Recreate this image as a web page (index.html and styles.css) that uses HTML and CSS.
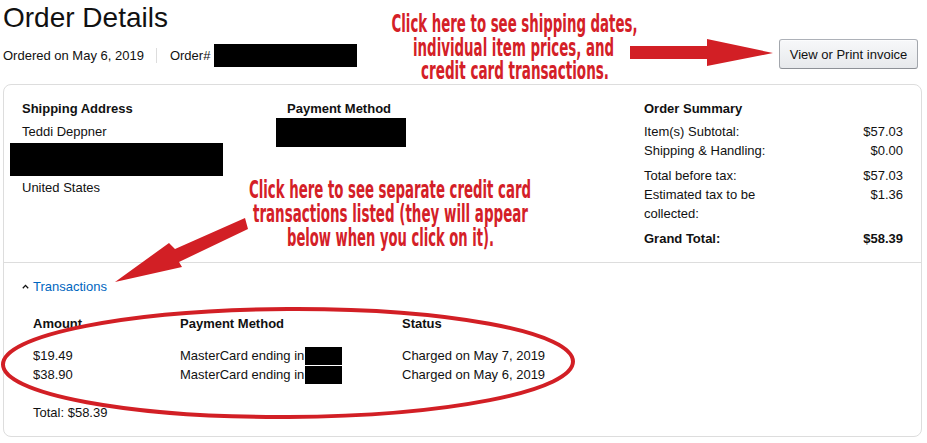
FILE: index.html
```html
<!DOCTYPE html>
<html lang="en">
<head>
<meta charset="utf-8">
<title>Order Details</title>
<link rel="stylesheet" href="styles.css">
</head>
<body>
<div class="page">
  <header class="top">
    <div class="top-left">
      <h1 class="title">Order Details</h1>
      <div class="meta">
        <span>Ordered on May 6, 2019</span>
        <span class="sep"></span>
        <span>Order#</span>
        <span class="redact redact-order"></span>
      </div>
    </div>
    <button class="btn" type="button">View or Print invoice</button>
  </header>

  <section class="card">
    <div class="card-top">
      <div class="col">
        <h3 class="col-title">Shipping Address</h3>
        <div>Teddi Deppner</div>
        <div class="redact redact-addr"></div>
        <div>United States</div>
      </div>
      <div class="col">
        <h3 class="col-title">Payment Method</h3>
        <div class="redact redact-pay"></div>
      </div>
      <div class="col summary">
        <h3 class="col-title">Order Summary</h3>
        <div class="sum-group">
          <div class="sum-row"><div class="sum-label">Item(s) Subtotal:</div><div class="sum-val">$57.03</div></div>
          <div class="sum-row"><div class="sum-label">Shipping &amp; Handling:</div><div class="sum-val">$0.00</div></div>
        </div>
        <div class="sum-group">
          <div class="sum-row"><div class="sum-label">Total before tax:</div><div class="sum-val">$57.03</div></div>
          <div class="sum-row"><div class="sum-label">Estimated tax to be collected:</div><div class="sum-val">$1.36</div></div>
        </div>
        <div class="sum-group">
          <div class="sum-row sum-grand"><div class="sum-label">Grand Total:</div><div class="sum-val">$58.39</div></div>
        </div>
      </div>
    </div>

    <div class="card-bottom">
      <a class="tx-toggle" href="#"><svg class="caret" width="7" height="5" viewBox="0 0 7 5"><path d="M0.8 4.3 L3.5 1.4 L6.2 4.3" fill="none" stroke="#111" stroke-width="1.3"/></svg><span>Transactions</span></a>
      <div class="tx-table">
        <div class="tx-head">Amount</div>
        <div class="tx-head">Payment Method</div>
        <div class="tx-head">Status</div>

        <div class="tx-cell tx-first">$19.49</div>
        <div class="tx-cell tx-first">MasterCard ending in<span class="redact redact-card"></span></div>
        <div class="tx-cell tx-first">Charged on May 7, 2019</div>

        <div class="tx-cell">$38.90</div>
        <div class="tx-cell">MasterCard ending in<span class="redact redact-card"></span></div>
        <div class="tx-cell">Charged on May 6, 2019</div>
      </div>
      <div class="tx-total">Total: $58.39</div>
    </div>
  </section>

  <svg class="annot" width="927" height="443" viewBox="0 0 927 443">
    <ellipse cx="288" cy="363" rx="285" ry="54" fill="none" stroke="#d21f25" stroke-width="4" transform="rotate(-0.3 288 363)"/>
    <polygon points="630,46 707,46 707,39 773,53 707,66 707,59 630,59" fill="#d21f25"/>
    <polygon points="245,218 248,229 179,262 182,267 115,282 169,243 175,249" fill="#d21f25"/>
    <g class="annot-text">
      <text x="514.5" y="32" textLength="246" lengthAdjust="spacingAndGlyphs">Click here to see shipping dates,</text>
      <text x="513.5" y="56" textLength="201" lengthAdjust="spacingAndGlyphs">individual item prices, and</text>
      <text x="515" y="79" textLength="188" lengthAdjust="spacingAndGlyphs">credit card transactions.</text>
      <text x="390" y="198" textLength="282" lengthAdjust="spacingAndGlyphs">Click here to see separate credit card</text>
      <text x="390.5" y="222" textLength="275" lengthAdjust="spacingAndGlyphs">transactions listed (they will appear</text>
      <text x="390.5" y="246" textLength="207" lengthAdjust="spacingAndGlyphs">below when you click on it).</text>
    </g>
  </svg>
</div>
</body>
</html>
```
FILE: styles.css
```css
* { box-sizing: border-box; }

body {
  margin: 0;
  font-family: "Liberation Sans", Arial, sans-serif;
  font-size: 13px;
  line-height: 19px;
  color: #111;
  background: #fff;
}

.page {
  position: relative;
  width: 927px;
  height: 443px;
  padding: 0 5px 0 3px;
  overflow: hidden;
}

.top {
  display: flex;
  justify-content: space-between;
  align-items: flex-start;
}

.title {
  margin: 0;
  font-size: 28px;
  line-height: 36px;
  font-weight: 400;
}

.meta {
  display: flex;
  align-items: center;
  margin-top: 8px;
  height: 23px;
}

.sep {
  width: 1px;
  height: 15px;
  background: #ddd;
  margin: 0 13px 0 12px;
}

.redact { background: #000; }

.redact-order {
  width: 143px;
  height: 23px;
  margin-left: 4px;
}

.btn {
  margin-top: 39px;
  margin-right: 4px;
  width: 139px;
  height: 30px;
  padding: 0;
  border: 1px solid;
  border-color: #adb1b8 #a2a6ac #8d9096;
  border-radius: 3px;
  background: linear-gradient(#f7f8fa, #e7e9ec);
  font: inherit;
  color: #111;
  box-shadow: 0 1px 0 rgba(255,255,255,.6) inset;
}

.card {
  margin-top: 15px;
  border: 1px solid #ddd;
  border-radius: 8px;
}

.card-top {
  display: grid;
  grid-template-columns: 265px 357px 1fr;
  padding: 14px 18px;
}

.col-title {
  margin: 0 0 4px;
  font-size: 13px;
  line-height: 19px;
  font-weight: 700;
}

.redact-addr {
  width: 213px;
  height: 33px;
  margin: 2px 0 2px -12px;
}

.redact-pay {
  width: 130px;
  height: 29px;
  margin: -4px 0 0 -11px;
}

.sum-group + .sum-group { margin-top: 6px; }

.sum-row {
  display: flex;
  justify-content: space-between;
  gap: 8px;
}

.sum-label { width: 150px; }
.sum-val { text-align: right; }

.sum-grand { font-weight: 700; }

.card-bottom {
  border-top: 1px solid #ddd;
  padding: 14px 18px 14px;
}

.tx-toggle {
  display: flex;
  align-items: center;
  width: fit-content;
  color: #0066c0;
  text-decoration: none;
}

.caret { margin-right: 4px; margin-top: -1px; }

.tx-table {
  display: grid;
  grid-template-columns: 147px 222px 1fr;
  margin: 18px 0 0 11px;
}

.tx-head { font-weight: 700; }

.tx-first { margin-top: 13px; }

.redact-card {
  display: inline-block;
  width: 37px;
  height: 18px;
  vertical-align: -5px;
  margin-left: 1px;
}

.tx-total {
  margin: 19px 0 0 11px;
}

.annot {
  position: absolute;
  left: 0;
  top: 0;
  pointer-events: none;
}

.annot-text text {
  font-family: "Liberation Sans Narrow", "DejaVu Sans Condensed", "Liberation Sans", sans-serif;
  font-size: 24px;
  font-weight: 700;
  fill: #d42027;
  text-anchor: middle;
}
```
